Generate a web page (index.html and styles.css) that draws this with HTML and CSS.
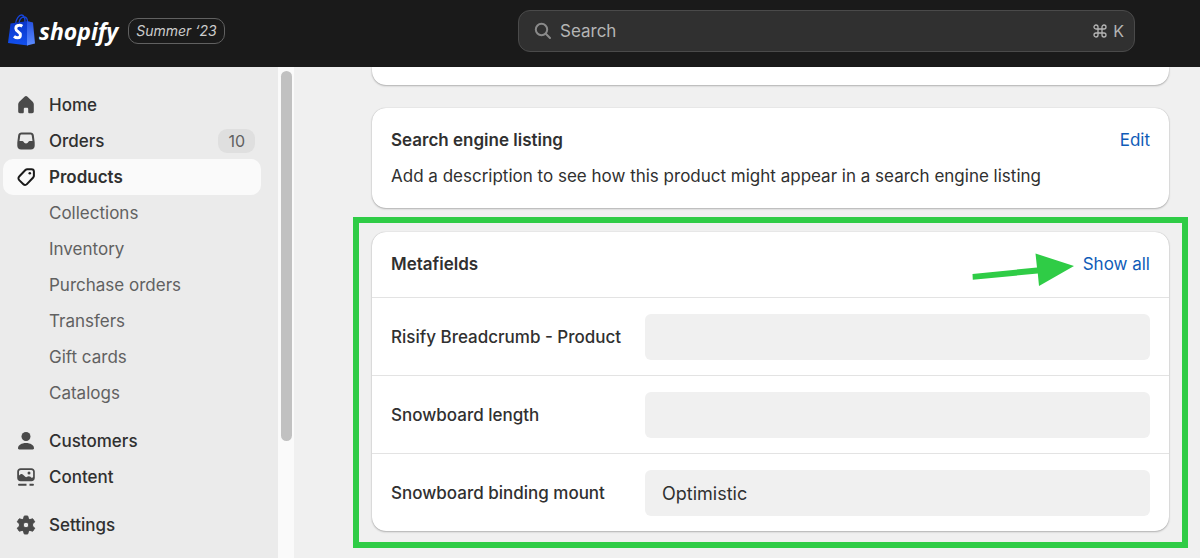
FILE: index.html
```html
<!DOCTYPE html>
<html lang="en">
<head>
<meta charset="utf-8">
<title>Products</title>
<link rel="stylesheet" href="styles.css">
</head>
<body>
<header class="topbar">
  <div class="brand">
    <svg class="brand-bag" viewBox="0 0 28 32" aria-hidden="true">
      <defs>
        <linearGradient id="bag" x1="0" y1="0" x2="0" y2="1"><stop offset="0" stop-color="#0a35c8"/><stop offset="1" stop-color="#1250ee"/></linearGradient>
        <linearGradient id="side" x1="0" y1="0" x2="0" y2="1"><stop offset="0" stop-color="#2450e0"/><stop offset="1" stop-color="#5c8cff"/></linearGradient>
      </defs>
      <path d="M7.500 10C8 5 11 1 13.500 1c2.500 0 3.500 3 3.500 7M11 9c.6-4 3-6 5-6 2 0 3.500 2 3.500 5" fill="none" stroke="#1644d8" stroke-width="1.300"/>
      <path d="M2.500 9.500 20 7v24.500L0 29z" fill="url(#bag)"/>
      <path d="M19 7l6 1.500L27 29.500 19 31.500z" fill="url(#side)"/>
      <path d="M14.300 12.200c-1-.7-2.200-1-3.200-.9-2 .1-3.300 1.400-3.300 3.200 0 3.400 4.600 3.200 4.600 6.400 0 1.800-1 2.900-2.700 2.900-1.200 0-2.700-.6-3.700-1.500" fill="none" stroke="#fff" stroke-width="2.900"/>
    </svg>
    <span class="brand-name">shopify</span>
    <span class="edition">Summer ‘23</span>
  </div>
  <label class="search">
    <svg class="search-icon" viewBox="0 0 18 18" aria-hidden="true"><circle cx="7.500" cy="7.500" r="5.700"/><path d="M11.800 11.800 16 16"/></svg>
    <input class="search-input" type="search" placeholder="Search" aria-label="Search">
    <span class="shortcut"><svg class="command" viewBox="0 0 14 14" aria-hidden="true"><path d="M5 5h4v4H5zM5 5H3a2 2 0 1 1 2-2zM9 5V3a2 2 0 1 1 2 2zM9 9h2a2 2 0 1 1-2 2zM5 9v2a2 2 0 1 1-2-2z"/></svg>K</span>
  </label>
</header>
<div class="layout">
  <nav class="sidebar" aria-label="Main">
    <a class="item" href="#"><svg class="icon" viewBox="0 0 20 20" aria-hidden="true"><path d="M8.500 1.800a2.200 2.200 0 0 1 3 0l5.200 5c.7.700 1.100 1.500 1.100 2.500v7.200c0 1-.7 1.700-1.700 1.700h-2.600c-.8 0-1.300-.5-1.300-1.300v-2.800c0-.8-.6-1.300-1.300-1.300h-1.800c-.7 0-1.300.5-1.300 1.300v2.800c0 .8-.5 1.300-1.300 1.300H3.900c-1 0-1.700-.7-1.700-1.700V9.300c0-1 .4-1.800 1.100-2.500z"/></svg>Home</a>
    <a class="item" href="#"><svg class="icon" viewBox="0 0 20 20" aria-hidden="true"><path fill-rule="evenodd" d="M5.500 1.500h9c1.800 0 3 1 3.300 2.700l.9 7.300v3.200c0 2.200-1.500 3.800-3.800 3.800H5.100c-2.300 0-3.800-1.600-3.800-3.800v-3.200l.9-7.300C2.500 2.500 3.700 1.500 5.500 1.500zm.3 2c-.9 0-1.500.5-1.600 1.400l-.7 5.100h2.700c.7 0 1.200.4 1.500 1 .4.900 1.200 1.400 2.300 1.400s1.900-.5 2.300-1.400c.3-.6.8-1 1.500-1h2.700l-.7-5.100c-.1-.9-.7-1.400-1.600-1.400z"/></svg>Orders<span class="count">10</span></a>
    <a class="item item-current" href="#" aria-current="page"><svg class="icon icon-line" viewBox="0 0 20 20" aria-hidden="true"><path d="M11.300 2.200h4.200c1.400 0 2.400 1 2.400 2.400v4.100c0 .7-.3 1.300-.7 1.800l-6.300 6.600c-1 1.100-2.500 1.100-3.500.1l-4.200-4.100c-1-1-1-2.600 0-3.600l6.200-6.500c.5-.5 1.200-.8 1.900-.8z"/><circle cx="13.800" cy="6.200" r="1.300"/></svg>Products</a>
    <a class="item item-sub" href="#">Collections</a>
    <a class="item item-sub" href="#">Inventory</a>
    <a class="item item-sub" href="#">Purchase orders</a>
    <a class="item item-sub" href="#">Transfers</a>
    <a class="item item-sub" href="#">Gift cards</a>
    <a class="item item-sub" href="#">Catalogs</a>
    <a class="item item-group" href="#"><svg class="icon" viewBox="0 0 20 20" aria-hidden="true"><circle cx="10" cy="5.500" r="4.500"/><path d="M2 17.200c0-3 3.600-5.200 8-5.200s8 2.200 8 5.200c0 .7-.5 1.200-1.200 1.200H3.200c-.7 0-1.200-.5-1.200-1.200z"/></svg>Customers</a>
    <a class="item" href="#"><svg class="icon" viewBox="0 0 20 20" aria-hidden="true"><path fill-rule="evenodd" d="M4.600 1.200h10.800c2 0 3.400 1.400 3.400 3.400v6.200c0 2-1.400 3.400-3.400 3.400H4.600c-2 0-3.400-1.400-3.400-3.400V4.600c0-2 1.400-3.400 3.400-3.400zm.3 1.900C3.700 3.100 3 3.800 3 4.900v3.500l1.300-.9c.9-.6 2-.5 2.800.2l2.200 2.100c.5.500 1.200.5 1.700 0 1-.9 2.500-.9 3.500 0l.7.700c.8.500 1.500.3 1.900-.4V4.900c0-1.100-.7-1.800-1.900-1.800z"/><circle cx="13" cy="6" r="1.500"/><path d="M3 16.800h7.500v2H3c-1.300 0-1.300-2 0-2zM13.500 16.800H17c1.300 0 1.300 2 0 2h-3.500z"/></svg>Content</a>
    <a class="item item-group" href="#"><svg class="icon" viewBox="0 0 20 20" aria-hidden="true"><path fill-rule="evenodd" d="M8.300 1h3.400l.8 2.800 1.300.8 2.900-.8 2 3-2.100 2.100v2.200l2.100 2.100-2 3-2.900-.8-1.300.8-.8 2.800H8.300l-.8-2.800-1.300-.8-2.900.8-2-3 2.100-2.100V8.900L1.300 6.800l2-3 2.900.8 1.300-.8zM10 7.200a2.800 2.800 0 1 0 0 5.600 2.800 2.800 0 0 0 0-5.600z" stroke="currentColor" stroke-width="1" stroke-linejoin="round"/></svg>Settings</a>
  </nav>
  <div class="scrollbar" aria-hidden="true"><div class="thumb"></div></div>
  <main class="content">
    <section class="card card-previous"></section>
    <section class="card card-seo">
      <div class="card-head"><h2 class="title">Search engine listing</h2><a class="link" href="#">Edit</a></div>
      <p class="text">Add a description to see how this product might appear in a search engine listing</p>
    </section>
    <div class="highlight">
      <section class="card">
        <div class="card-head card-head-meta">
          <h2 class="title">Metafields</h2>
          <a class="link" href="#">Show all<svg class="arrow" viewBox="0 0 104 36" aria-hidden="true"><path d="M.5 22 65 15.500 63.500 1.500 102 14 67 34 65.800 21.500.8 27.800z"/></svg></a>
        </div>
        <div class="field"><label class="label" for="breadcrumb">Risify Breadcrumb - Product</label><input class="value" id="breadcrumb" type="text"></div>
        <div class="field"><label class="label" for="length">Snowboard length</label><input class="value" id="length" type="text"></div>
        <div class="field"><label class="label" for="mount">Snowboard binding mount</label><input class="value" id="mount" type="text" value="Optimistic"></div>
      </section>
    </div>
  </main>
</div>
</body>
</html>
```
FILE: styles.css
```css
* { box-sizing: border-box; }
body {
  margin: 0;
  height: 100vh;
  display: flex;
  flex-direction: column;
  overflow: hidden;
  background: #f0f0f0;
  color: #303030;
  font: 17px/24px Inter, "Liberation Sans", sans-serif;
}
a { color: inherit; text-decoration: none; }
input { font: inherit; color: inherit; border: 0; outline: 0; min-width: 0; }

.topbar {
  flex: none;
  display: grid;
  grid-template-columns: 510px 1fr;
  padding: 10px 65px 15px 8px;
  background: #1a1a1a;
}
.brand { display: flex; align-items: center; }
.brand-bag { width: 28px; height: 32px; margin: 0 3px 2px 0; }
.brand-name {
  color: #fff;
  font: italic 700 23px/32px "Open Sans", sans-serif;
}
.edition {
  margin-left: 10px;
  padding: 0 7px;
  border: 1px solid #616161;
  border-radius: 10px;
  color: #ccc;
  font-size: 14px;
  font-style: italic;
}
.search {
  display: flex;
  align-items: center;
  gap: 8px;
  height: 42px;
  padding: 0 10px 0 15px;
  border: 1px solid #4a4a4a;
  border-radius: 12px;
  background: #303030;
  color: #b5b5b5;
}
.search-icon { width: 18px; height: 18px; fill: none; stroke: #8a8a8a; stroke-width: 2; stroke-linecap: round; }
.search-input { flex: 1; padding: 0; background: none; }
.search-input::placeholder { color: #b5b5b5; opacity: 1; }
.shortcut { display: flex; align-items: center; gap: 6px; font-size: 16px; }
.command { width: 14px; height: 14px; fill: none; stroke: #b5b5b5; stroke-width: 1.3; }

.layout { flex: 1; display: flex; min-height: 0; }
.sidebar { width: 278px; flex: none; padding: 20px 17px 0 3px; background: #ebebeb; }
.item {
  display: flex;
  align-items: center;
  gap: 13px;
  height: 36px;
  padding: 0 6px 0 13px;
  border-radius: 10px;
  font-weight: 500;
}
.item-current { background: #fafafa; font-weight: 600; }
.item-sub { padding-left: 46px; color: #616161; font-weight: 400; }
.item-group { margin-top: 12px; }
.icon { width: 20px; height: 20px; flex: none; fill: #4a4a4a; color: #4a4a4a; }
.icon-line { color: #1a1a1a; fill: none; stroke: #1a1a1a; stroke-width: 2; }
.icon-line circle { fill: #1a1a1a; stroke: none; }
.count {
  margin-left: auto;
  padding: 0 10px;
  border-radius: 9px;
  background: #dfdfdf;
  color: #616161;
  font-size: 16px;
  font-weight: 400;
}
.scrollbar { width: 16px; flex: none; padding: 4px 2px 0 3px; background: #fafafa; }
.thumb { height: 76%; border-radius: 6px; background: #c1c1c1; }

.content { flex: 1; min-width: 0; padding: 0 12px 0 59px; }
.card { border-radius: 14px; background: #fff; box-shadow: 0 1px 2px #00000040, 0 0 1px #00000040; }
.card-previous { height: 18px; margin: 0 19px 23px; border-radius: 0 0 14px 14px; }
.card-seo { margin: 0 19px 9px; padding: 20px 19px; }
.card-head { display: flex; justify-content: space-between; align-items: center; }
.card-head-meta { padding: 20px 19px 21px; }
.title { margin: 0; font-size: 17px; line-height: 24px; font-weight: 600; }
.text { margin: 12px 0 0; }
.link { position: relative; color: #0f5cb8; }
.highlight { border: 6px solid #2fcc46; padding: 9px 13px 11px; }
.arrow { position: absolute; right: 74px; top: 0; width: 104px; height: 36px; fill: #2fcc46; }
.field {
  display: grid;
  grid-template-columns: 254px 1fr;
  align-items: center;
  padding: 16px 19px 15px;
  border-top: 1px solid #e3e3e3;
}
.label { font-weight: 500; }
.value { height: 46px; padding: 0 17px; border-radius: 6px; background: #f0f0f0; font-size: 18px; }
```
